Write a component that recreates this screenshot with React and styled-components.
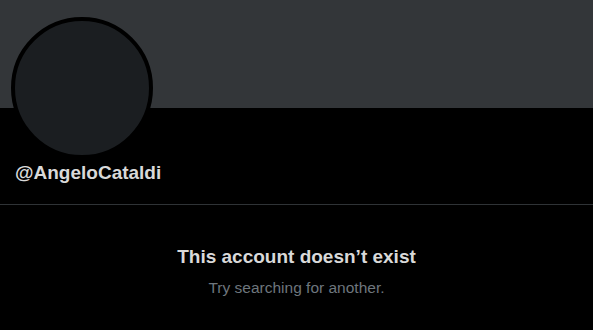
import styled, { createGlobalStyle } from "styled-components";

const GlobalStyle = createGlobalStyle`
  html, body {
    margin: 0;
    padding: 0;
    background: #000;
  }
  body {
    font-family: "Liberation Sans", Arial, sans-serif;
  }
`;

const Page = styled.div`
  width: 593px;
  height: 330px;
  background: #000;
  overflow: hidden;
  display: flex;
  flex-direction: column;
`;

const Banner = styled.div`
  height: 108px;
  background: #333639;
  flex-shrink: 0;
`;

const ProfileHeader = styled.div`
  display: flex;
  flex-direction: column;
  padding: 0 15px 19px;
  border-bottom: 1px solid #2f3336;
`;

const Avatar = styled.div`
  width: 134px;
  height: 134px;
  margin-top: -91px;
  margin-left: -4px;
  border-radius: 50%;
  border: 4px solid #000;
  background: #1b1e21;
`;

const Handle = styled.div`
  margin-top: 2px;
  color: #d9d9d9;
  font-size: 19px;
  font-weight: 700;
  line-height: 24px;
`;

const EmptyState = styled.div`
  display: flex;
  flex-direction: column;
  align-items: center;
  padding-top: 40px;
  gap: 9px;
`;

const Title = styled.div`
  color: #d9d9d9;
  font-size: 19px;
  font-weight: 700;
  line-height: 24px;
`;

const Subtitle = styled.div`
  color: #6e767d;
  font-size: 15.5px;
  line-height: 20px;
`;

export default function App() {
  return (
    <>
      <GlobalStyle />
      <Page>
        <Banner />
        <ProfileHeader>
          <Avatar />
          <Handle>@AngeloCataldi</Handle>
        </ProfileHeader>
        <EmptyState>
          <Title>This account doesn’t exist</Title>
          <Subtitle>Try searching for another.</Subtitle>
        </EmptyState>
      </Page>
    </>
  );
}
